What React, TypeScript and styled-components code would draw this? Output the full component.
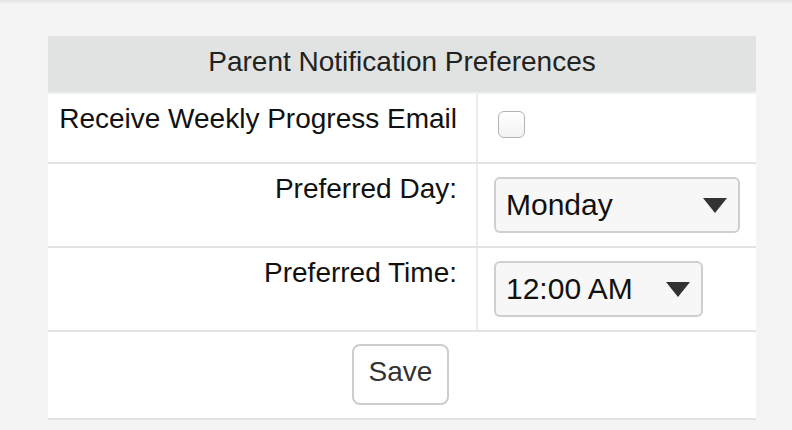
import React from "react";
import styled, { createGlobalStyle } from "styled-components";

const Global = createGlobalStyle`
  html, body {
    margin: 0;
    padding: 0;
  }
  body {
    background: linear-gradient(to bottom, #e2e2e2 0px, #f4f4f4 4px) no-repeat, #f4f4f4;
    font-family: "Liberation Sans", Arial, sans-serif;
    width: 792px;
    height: 430px;
    overflow: hidden;
  }
`;

const Page = styled.div`
  padding: 36px 36px 0 48px;
`;

const Panel = styled.div`
  width: 708px;
  background: #fff;
  border-bottom: 2px solid #e3e3e3;
`;

const Header = styled.div`
  height: 58px;
  box-sizing: border-box;
  padding: 10px 0 14px;
  background: #e1e3e2;
  border-bottom: 2px solid #ebf0f3;
  text-align: center;
  font-size: 28px;
  line-height: 32px;
  color: #222;
`;

const Row = styled.div<{ $minHeight?: number }>`
  display: grid;
  grid-template-columns: 430px 1fr;
  min-height: ${(p) => p.$minHeight ?? 0}px;
  border-bottom: 2px solid #e3e3e3;
`;

const Label = styled.div`
  border-right: 2px solid #e8eff4;
  padding: 9px 19px 0 8px;
  text-align: right;
  white-space: nowrap;
  font-size: 28px;
  line-height: 32px;
  color: #111;
`;

const Value = styled.div`
  padding: 13px 16px;
  display: flex;
  align-items: flex-start;
`;

const Checkbox = styled.span`
  display: block;
  width: 27px;
  height: 27px;
  box-sizing: border-box;
  margin: 4px;
  border: 1.5px solid #b3b3b3;
  border-radius: 6px;
  background: linear-gradient(#ffffff, #f2f2f2);
`;

const SelectBox = styled.div<{ $width: number }>`
  width: ${(p) => p.$width}px;
  height: 56px;
  box-sizing: border-box;
  border: 2px solid #cfcfcf;
  border-radius: 6px;
  background: #f7f7f7;
  display: flex;
  align-items: center;
  justify-content: space-between;
  padding: 0 11px 0 10px;
  font-size: 30px;
  line-height: 52px;
  color: #111;
`;

const Arrow = styled.svg`
  width: 24px;
  height: 15px;
  display: block;
`;

const Footer = styled.div`
  height: 86px;
  box-sizing: border-box;
  padding-top: 12px;
  display: flex;
  justify-content: center;
  align-items: flex-start;
`;

const Button = styled.button`
  width: 97px;
  height: 61px;
  box-sizing: border-box;
  margin-left: -3px;
  border: 2px solid #cdcdcd;
  border-radius: 8px;
  background: #fff;
  padding: 0 0 5px;
  font-family: "Liberation Sans", Arial, sans-serif;
  font-size: 28px;
  color: #333;
  cursor: pointer;
`;

const Select = ({ value, width }: { value: string; width: number }) => (
  <SelectBox $width={width}>
    <span>{value}</span>
    <Arrow viewBox="0 0 24 15">
      <polygon points="0,0 24,0 12,15" fill="#333" />
    </Arrow>
  </SelectBox>
);

export default function App() {
  return (
    <>
      <Global />
      <Page>
        <Panel>
          <Header>Parent Notification Preferences</Header>
          <Row $minHeight={68}>
            <Label>Receive Weekly Progress Email</Label>
            <Value>
              <Checkbox />
            </Value>
          </Row>
          <Row>
            <Label>Preferred Day:</Label>
            <Value>
              <Select value="Monday" width={246} />
            </Value>
          </Row>
          <Row>
            <Label>Preferred Time:</Label>
            <Value>
              <Select value="12:00 AM" width={209} />
            </Value>
          </Row>
          <Footer>
            <Button>Save</Button>
          </Footer>
        </Panel>
      </Page>
    </>
  );
}
